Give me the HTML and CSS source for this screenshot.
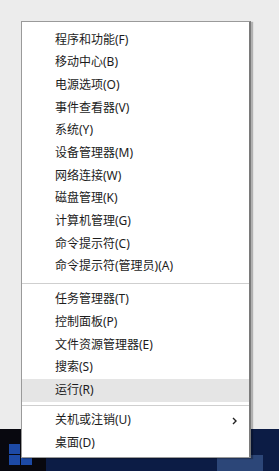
FILE: index.html
```html
<!DOCTYPE html>
<html>
    <head>
        <meta charset="utf-8">
        <link rel="stylesheet" href="styles.css">
    </head>
    <body>
        <div class="desktop">
            <div class="taskbar">
                <div class="startButton">
                    <div class="logo">
                        <span></span><span></span><span></span><span></span>
                    </div>
                </div>
                <div class="taskItem"></div>
            </div>
        </div>

        <!-- Win+X menu -->
        <div class="menu">
            <div class="item">程序和功能(F)</div>
            <div class="item">移动中心(B)</div>
            <div class="item">电源选项(O)</div>
            <div class="item">事件查看器(V)</div>
            <div class="item">系统(Y)</div>
            <div class="item">设备管理器(M)</div>
            <div class="item">网络连接(W)</div>
            <div class="item">磁盘管理(K)</div>
            <div class="item">计算机管理(G)</div>
            <div class="item">命令提示符(C)</div>
            <div class="item">命令提示符(管理员)(A)</div>
            <div class="separator first"></div>
            <div class="item">任务管理器(T)</div>
            <div class="item">控制面板(P)</div>
            <div class="item">文件资源管理器(E)</div>
            <div class="item">搜索(S)</div>
            <div class="item selected">运行(R)</div>
            <div class="separator"></div>
            <div class="item hasSub">关机或注销(U)
                <svg class="arrow" width="6" height="8" viewBox="0 0 6 8"><path d="M1 1 L4 4 L1 7" fill="none" stroke="#222" stroke-width="1.4"/></svg>
            </div>
            <div class="item">桌面(D)</div>
        </div>
    </body>
</html>
```

FILE: styles.css
```css
html, body {
    margin: 0;
    padding: 0;
}

body {
    width: 279px;
    height: 471px;
    overflow: hidden;
    background-color: #ececec;
    font-family: "Noto Sans", "Noto Sans CJK SC", sans-serif;
    position: relative;
}

.desktop {
    height: 471px;
    display: flex;
    flex-direction: column;
}

.taskbar {
    margin-top: auto;
    height: 42px;
    background-color: #0c1c45;
    display: flex;
    align-items: flex-end;
}

.startButton {
    width: 46px;
    height: 42px;
    background-color: #08080f;
    display: flex;
    align-items: center;
}

.logo {
    margin-left: 9px;
    margin-top: 8px;
    display: grid;
    grid-template-columns: 11px 11px;
    grid-template-rows: 10px 10px;
    gap: 1px;
}

.logo span {
    background-color: #1d4aa6;
}

.taskItem {
    margin-left: 171px;
    width: 46px;
    height: 16px;
    background-color: #2c4678;
}

.menu {
    position: absolute;
    left: 21px;
    top: 21px;
    width: 230px;
    height: 437px;
    box-sizing: border-box;
    background-color: #ffffff;
    border: 1px solid #9a9a9a;
    border-right: 2px solid #7a7a7a;
    box-shadow: 2px 1px 1px rgba(0, 0, 0, 0.25);
    padding-top: 6.6px;
}

.item {
    height: 22.7px;
    line-height: 22.7px;
    padding-left: 33px;
    font-size: 12px;
    color: #1c1c1c;
    white-space: nowrap;
    position: relative;
}

.selected {
    background-color: #e5e5e5;
}

.separator {
    height: 1px;
    background-color: #cfcfcf;
    margin: 3px 0 3.6px 0;
}

.separator.first {
    margin: 4.4px 0 4.6px 0;
}

.arrow {
    position: absolute;
    right: 11px;
    top: 8px;
}
```
